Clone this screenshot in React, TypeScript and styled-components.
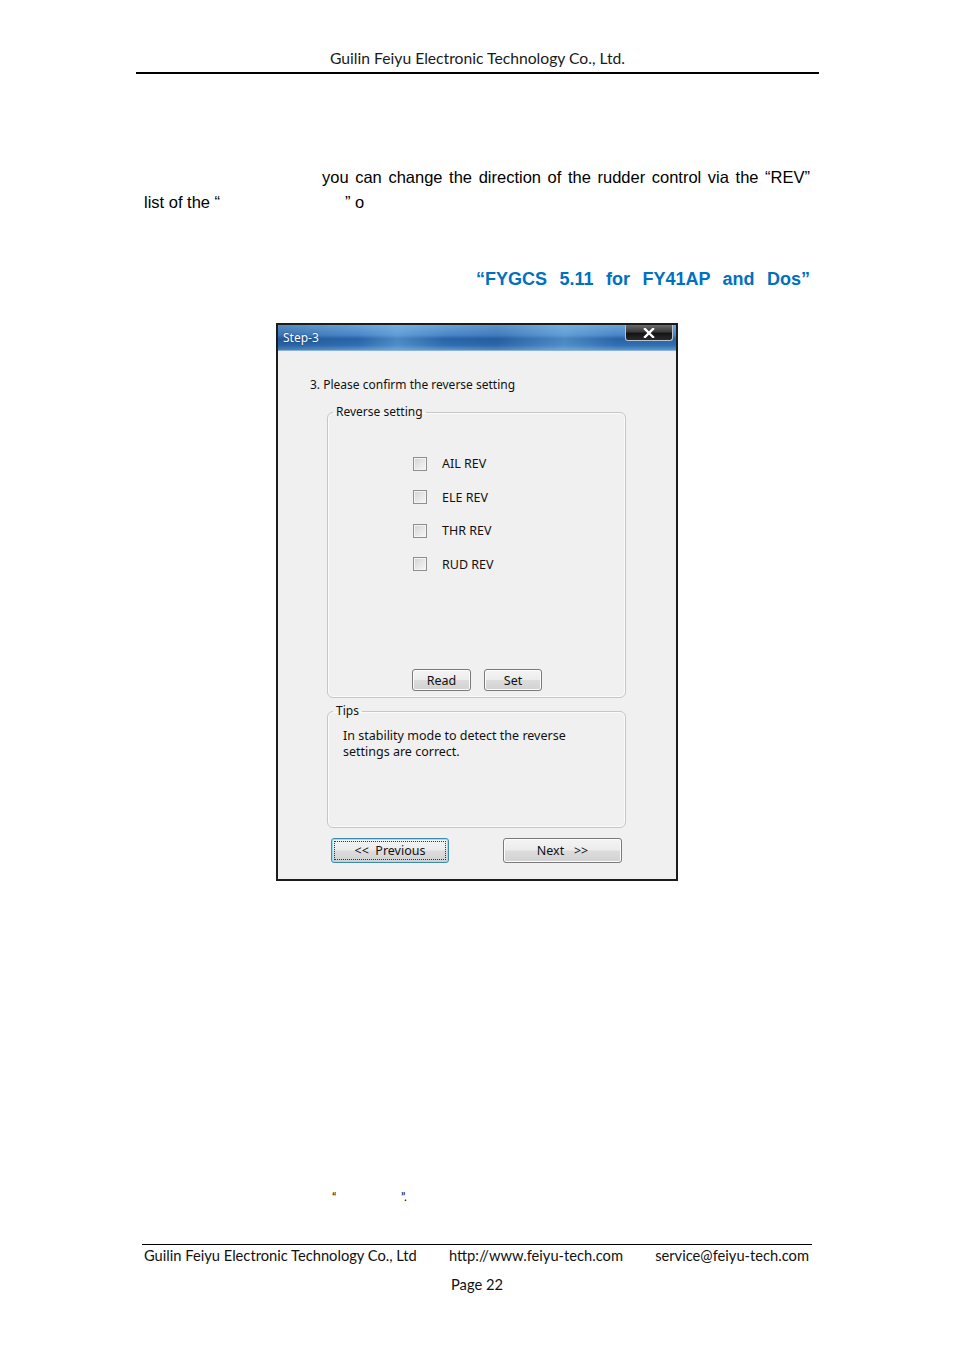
import React from 'react'
import styled, { createGlobalStyle } from 'styled-components'

const GlobalStyle = createGlobalStyle`
  html, body {
    margin: 0;
    padding: 0;
    background: #ffffff;
  }
  * {
    box-sizing: border-box;
  }
`

const REV_ITEMS = ['AIL REV', 'ELE REV', 'THR REV', 'RUD REV']

export default function App() {
  return (
    <>
      <GlobalStyle />
      <Page>
        <Header>Guilin Feiyu Electronic Technology Co., Ltd.</Header>

        <Content>
          <Paragraph>
            <FirstLine>you can change the direction of the rudder control via the “REV”</FirstLine>
            <Line>
              <Blank $w={201}>list of the “</Blank>” o
            </Line>
          </Paragraph>

          <BlueTitle>“FYGCS 5.11 for FY41AP and Dos”</BlueTitle>

          <Dialog>
            <TitleBar>
              <TitleText>Step-3</TitleText>
              <CloseButton>
                <svg width="12" height="10" viewBox="0 0 12 10">
                  <path d="M2 1 L10 9 M10 1 L2 9" stroke="#ffffff" strokeWidth="2.4" strokeLinecap="square" />
                </svg>
              </CloseButton>
            </TitleBar>

            <DialogBody>
              <Prompt>3. Please confirm the reverse setting</Prompt>

              <GroupBox $h={294} $mt={11}>
                <GroupLegend>Reverse setting</GroupLegend>
                <ReverseInner $h={276}>
                  <CheckList>
                    {REV_ITEMS.map((item) => (
                      <CheckRow key={item}>
                        <CheckBox />
                        <CheckLabel>{item}</CheckLabel>
                      </CheckRow>
                    ))}
                  </CheckList>
                  <ButtonRow>
                    <WinButton $w={59} $h={22}>Read</WinButton>
                    <WinButton $w={58} $h={22}>Set</WinButton>
                  </ButtonRow>
                </ReverseInner>
              </GroupBox>

              <GroupBox $h={125} $mt={5}>
                <GroupLegend>Tips</GroupLegend>
                <TipsText>
                  In stability mode to detect the reverse
                  <br />
                  settings are correct.
                </TipsText>
              </GroupBox>

              <NavRow>
                <WinButton $w={118} $h={25} $focused>
                  {'<<  Previous'}
                </WinButton>
                <WinButton $w={119} $h={25}>
                  {'Next   >>'}
                </WinButton>
              </NavRow>
            </DialogBody>
          </Dialog>

          <QuoteLine>
            <Blank $w={69}>“</Blank>”.
          </QuoteLine>
        </Content>

        <Footer>
          <FooterRow>
            <span>Guilin Feiyu Electronic Technology Co., Ltd</span>
            <span>http://www.feiyu-tech.com</span>
            <span>service@feiyu-tech.com</span>
          </FooterRow>
          <PageNo>Page 22</PageNo>
        </Footer>
      </Page>
    </>
  )
}

const Page = styled.div`
  width: 954px;
  min-height: 1350px;
  background: #ffffff;
  color: #000000;
  font-family: 'Liberation Sans', Arial, sans-serif;
  overflow: hidden;
`

const Header = styled.div`
  margin: 0 135px 0 136px;
  padding-top: 49px;
  padding-bottom: 5px;
  border-bottom: 2px solid #000000;
  text-align: center;
  font-family: Lato, 'Open Sans', sans-serif;
  font-size: 15.7px;
  line-height: 18px;
  color: #1a1a1a;
`

const Content = styled.div`
  margin: 0 144px;
`

const Paragraph = styled.div`
  margin-top: 91px;
  font-size: 16.5px;
  line-height: 25px;
`

const FirstLine = styled.div`
  padding-left: 178px;
  text-align: justify;
  text-align-last: justify;
  white-space: nowrap;
`

const Line = styled.div`
  white-space: nowrap;
`

const Blank = styled.span<{ $w: number }>`
  display: inline-block;
  width: ${(p) => p.$w}px;
`

const BlueTitle = styled.div`
  margin: 52px 0 0 332px;
  font-size: 18px;
  line-height: 24px;
  font-weight: 700;
  color: #0070c0;
  text-align: justify;
  text-align-last: justify;
  white-space: nowrap;
`

const Dialog = styled.div`
  width: 402px;
  height: 558px;
  margin: 32px auto 0;
  border: 2px solid #1c1c1c;
  display: flex;
  flex-direction: column;
  background: #f0f0f0;
  font-family: 'Noto Sans', 'DejaVu Sans', sans-serif;
`

const TitleBar = styled.div`
  height: 26px;
  display: flex;
  justify-content: space-between;
  align-items: flex-start;
  padding: 0 3px 0 5px;
  background:
    linear-gradient(
      90deg,
      rgba(20, 60, 120, 0.25) 0%,
      rgba(255, 255, 255, 0) 20%,
      rgba(140, 200, 240, 0.35) 30%,
      rgba(255, 255, 255, 0) 42%,
      rgba(20, 60, 120, 0.15) 55%,
      rgba(140, 200, 240, 0.35) 72%,
      rgba(255, 255, 255, 0) 85%
    ),
    linear-gradient(180deg, #6aa3d8 0%, #4a86c6 40%, #2a63a8 55%, #2f6db0 80%, #5b95cf 100%);
  border-bottom: 1px solid #8fb3d6;
`

const TitleText = styled.span`
  margin-top: 5px;
  font-size: 12px;
  line-height: 16px;
  color: #ffffff;
  text-shadow: 0 0 2px rgba(0, 30, 80, 0.6);
`

const CloseButton = styled.div`
  width: 48px;
  height: 16px;
  display: flex;
  align-items: center;
  justify-content: center;
  background: linear-gradient(180deg, #6a6a6a 0%, #3a3a3a 45%, #141414 55%, #2a2a2a 100%);
  border: 1px solid #b9c4cc;
  border-top: none;
  border-radius: 0 0 3px 3px;
`

const DialogBody = styled.div`
  flex: 1;
  display: flex;
  flex-direction: column;
  background: #f0f0f0;
  font-size: 12px;
  color: #111111;
`

const Prompt = styled.div`
  padding: 26px 0 0 32px;
  line-height: 16px;
`

const GroupBox = styled.fieldset<{ $h: number; $mt: number }>`
  height: ${(p) => p.$h}px;
  margin: ${(p) => p.$mt}px 50px 0 49px;
  padding: 0;
  min-inline-size: 0;
  border: 1px solid #c6c6c6;
  border-radius: 6px;
  box-shadow: inset 0 0 0 1px #fbfbfb;
`

const GroupLegend = styled.legend`
  margin-left: 5px;
  padding: 0 3px;
  line-height: 16px;
  font-size: 12px;
`

const ReverseInner = styled.div<{ $h: number }>`
  height: ${(p) => p.$h}px;
  display: flex;
  flex-direction: column;
  justify-content: space-between;
  padding: 27px 0 5px;
`

const CheckList = styled.div`
  display: flex;
  flex-direction: column;
  padding-left: 85px;
`

const CheckRow = styled.div`
  height: 33.5px;
  display: flex;
  align-items: center;
  gap: 15px;
`

const CheckBox = styled.span`
  width: 14px;
  height: 14px;
  border: 1px solid #8f8f8f;
  background: linear-gradient(135deg, #d2d2d2 0%, #e6e6e6 50%, #f6f6f6 100%);
  box-shadow: inset 0 0 0 1px #f4f4f4;
`

const CheckLabel = styled.span`
  font-size: 12.5px;
`

const ButtonRow = styled.div`
  display: flex;
  justify-content: center;
  gap: 13px;
  padding-left: 1px;
`

const WinButton = styled.button<{ $w: number; $h: number; $focused?: boolean }>`
  position: relative;
  width: ${(p) => p.$w}px;
  height: ${(p) => p.$h}px;
  padding: 0;
  font-family: 'Noto Sans', 'DejaVu Sans', sans-serif;
  font-size: 12.5px;
  color: #111111;
  white-space: pre;
  border: 1px solid ${(p) => (p.$focused ? '#3c8bb0' : '#7a7a7a')};
  border-radius: 3px;
  background: linear-gradient(180deg, #f4f4f4 0%, #ececec 48%, #dcdcdc 52%, #d2d2d2 100%);
  box-shadow: inset 0 0 0 1px ${(p) => (p.$focused ? '#9fdcf0' : '#fcfcfc')};

  &::after {
    content: '';
    display: ${(p) => (p.$focused ? 'block' : 'none')};
    position: absolute;
    inset: 2px;
    border: 1px dotted #333333;
  }
`

const TipsText = styled.div`
  padding: 9px 0 0 15px;
  line-height: 16px;
  font-size: 12.5px;
`

const NavRow = styled.div`
  display: flex;
  justify-content: space-between;
  margin: 10px 54px 0 53px;
`

const QuoteLine = styled.div`
  margin: 308px 0 0 188px;
  font-family: Lato, 'Open Sans', sans-serif;
  font-size: 12px;
  line-height: 16px;
  color: #000000;
`

const Footer = styled.div`
  margin: 39px 142px 0;
  border-top: 1px solid #000000;
  font-family: Lato, 'Open Sans', sans-serif;
  font-size: 14.7px;
  line-height: 18px;
  color: #111111;
`

const FooterRow = styled.div`
  display: flex;
  justify-content: space-between;
  padding: 1px 3px 0 2px;
`

const PageNo = styled.div`
  margin-top: 11px;
  text-align: center;
`
